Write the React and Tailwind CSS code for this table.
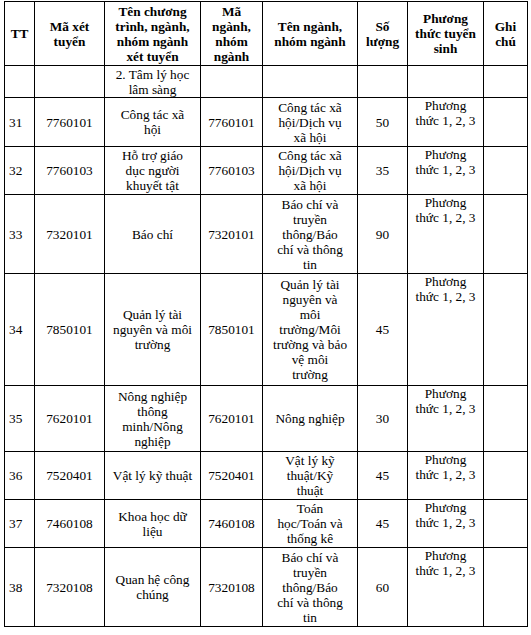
import React from 'react';

const cols = [30, 70, 96, 62, 95, 50, 76, 44];

const header = [
  ['TT'],
  ['Mã xét', 'tuyển'],
  ['Tên chương', 'trình, ngành,', 'nhóm ngành', 'xét tuyển'],
  ['Mã', 'ngành,', 'nhóm', 'ngành'],
  ['Tên ngành,', 'nhóm ngành'],
  ['Số', 'lượng'],
  ['Phương', 'thức tuyển', 'sinh'],
  ['Ghi', 'chú'],
];

const pt = ['Phương', 'thức 1, 2, 3'];

const rows = [
  { h: 32, tt: '', ma: '', ten: ['2. Tâm lý học', 'lâm sàng'], code: '', nganh: [], sl: '', pt: [] },
  { h: 49, tt: '31', ma: '7760101', ten: ['Công tác xã', 'hội'], code: '7760101', nganh: ['Công tác xã', 'hội/Dịch vụ', 'xã hội'], sl: '50', pt },
  { h: 48, tt: '32', ma: '7760103', ten: ['Hỗ trợ giáo', 'dục người', 'khuyết tật'], code: '7760103', nganh: ['Công tác xã', 'hội/Dịch vụ', 'xã hội'], sl: '35', pt },
  { h: 79, tt: '33', ma: '7320101', ten: ['Báo chí'], code: '7320101', nganh: ['Báo chí và', 'truyền', 'thông/Báo', 'chí và thông', 'tin'], sl: '90', pt },
  { h: 112, tt: '34', ma: '7850101', ten: ['Quản lý tài', 'nguyên và môi', 'trường'], code: '7850101', nganh: ['Quản lý tài', 'nguyên và', 'môi', 'trường/Môi', 'trường và bảo', 'vệ môi', 'trường'], sl: '45', pt },
  { h: 66, tt: '35', ma: '7620101', ten: ['Nông nghiệp', 'thông', 'minh/Nông', 'nghiệp'], code: '7620101', nganh: ['Nông nghiệp'], sl: '30', pt },
  { h: 48, tt: '36', ma: '7520401', ten: ['Vật lý kỹ thuật'], code: '7520401', nganh: ['Vật lý kỹ', 'thuật/Kỹ', 'thuật'], sl: '45', pt },
  { h: 48, tt: '37', ma: '7460108', ten: ['Khoa học dữ', 'liệu'], code: '7460108', nganh: ['Toán', 'học/Toán và', 'thống kê'], sl: '45', pt },
  { h: 79, tt: '38', ma: '7320108', ten: ['Quan hệ công', 'chúng'], code: '7320108', nganh: ['Báo chí và', 'truyền', 'thông/Báo', 'chí và thông', 'tin'], sl: '60', pt },
];

const Lines = ({ lines }) => (
  <>
    {lines.map((l, i) => (
      <div key={i} className="whitespace-nowrap">{l}</div>
    ))}
  </>
);

const cell = 'border border-black p-0 align-middle text-center';

export default function App() {
  return (
    <div className="bg-white min-h-screen pt-px pl-[4px] text-black font-[family-name:'Liberation_Serif',serif] text-[13.3px] leading-[15px]">
      <table className="table-fixed border-collapse border-[1.5px] border-black" style={{ width: 523 }}>
        <colgroup>
          {cols.map((w, i) => (
            <col key={i} style={{ width: w }} />
          ))}
        </colgroup>
        <thead>
          <tr>
            {header.map((h, i) => (
              <th key={i} className={`${cell} h-[64px] font-bold`}>
                <Lines lines={h} />
              </th>
            ))}
          </tr>
        </thead>
        <tbody>
          {rows.map((r, i) => (
            <tr key={i}>
              <td className="border border-black p-0 pl-[4px] align-middle text-left" style={{ height: r.h }}>{r.tt}</td>
              <td className={cell}>{r.ma}</td>
              <td className={cell}><Lines lines={r.ten} /></td>
              <td className={cell}>{r.code}</td>
              <td className={cell}><Lines lines={r.nganh} /></td>
              <td className={cell}>{r.sl}</td>
              <td className="border border-black p-0 align-top text-center"><Lines lines={r.pt} /></td>
              <td className={cell}></td>
            </tr>
          ))}
        </tbody>
      </table>
    </div>
  );
}
